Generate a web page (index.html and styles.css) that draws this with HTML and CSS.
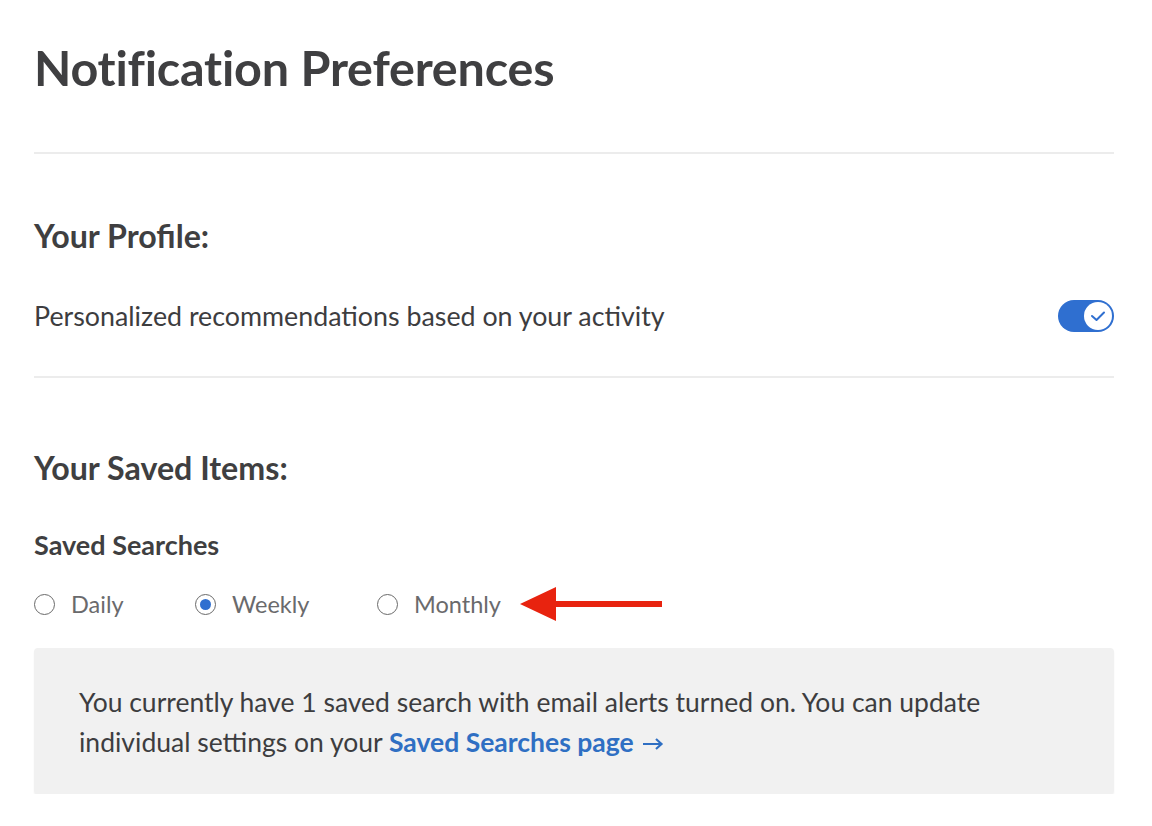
FILE: index.html
```html
<!DOCTYPE html>
<html>
<head>
<meta charset="utf-8">
<link rel="stylesheet" href="styles.css">
</head>
<body>
<main class="page">
  <h1 class="title">Notification Preferences</h1>
  <hr class="divider">
  <section class="section">
    <h2 class="section-title">Your Profile:</h2>
    <div class="setting-row">
      <span class="setting-label">Personalized recommendations based on your activity</span>
      <span class="toggle">
        <span class="knob">
          <svg width="16" height="12" viewBox="0 0 16 12"><path d="M2 6 L6.5 10 L14 2.5" fill="none" stroke="#2f6fd0" stroke-width="2" stroke-linecap="round" stroke-linejoin="round"/></svg>
        </span>
      </span>
    </div>
  </section>
  <hr class="divider tight">
  <section class="section saved">
    <h2 class="section-title">Your Saved Items:</h2>
    <h3 class="sub-title">Saved Searches</h3>
    <div class="radios">
      <label class="radio r-daily"><span class="dot"></span><span class="radio-text">Daily</span></label>
      <label class="radio r-weekly"><span class="dot checked"></span><span class="radio-text">Weekly</span></label>
      <label class="radio r-monthly"><span class="dot"></span><span class="radio-text">Monthly</span></label>
      <svg class="arrow" width="143" height="34" viewBox="0 0 143 34"><path d="M0 17 L36 0 L36 14 L142 14 L142 20 L36 20 L36 34 Z" fill="#e8230f"/></svg>
    </div>
    <div class="info-box">
      You currently have 1 saved search with email alerts turned on. You can update individual settings on your <a class="link" href="#">Saved Searches page<svg class="link-arrow" width="22" height="14" viewBox="0 0 22 14"><path d="M1 7 H19 M14 2 L19.5 7 L14 12" fill="none" stroke="#2f6fc3" stroke-width="2.2" stroke-linejoin="miter"/></svg></a>
    </div>
  </section>
</main>
</body>
</html>
```
FILE: styles.css
```css
html, body {
  margin: 0;
  padding: 0;
  background: #ffffff;
}
body {
  font-family: "Lato", "Open Sans", sans-serif;
  color: #3d3d3f;
}
.page {
  padding: 36px 38px 0 34px;
}
.title {
  margin: 0;
  font-size: 48.5px;
  font-weight: 700;
  line-height: 62px;
  color: #3f3f41;
  letter-spacing: -0.2px;
}
.divider {
  border: 0;
  border-top: 2px solid #ececec;
  margin: 54px 0 0 0;
}
.divider.tight {
  margin-top: 42px;
}
.section {
  padding-top: 62px;
}
.section-title {
  margin: 0;
  font-size: 32.2px;
  font-weight: 700;
  line-height: 40px;
  color: #3f3f41;
}
.setting-row {
  display: flex;
  align-items: center;
  justify-content: space-between;
  margin-top: 42px;
}
.setting-label {
  font-size: 26.8px;
  line-height: 36px;
  color: #3d3d3f;
}
.toggle {
  width: 56px;
  height: 32px;
  border-radius: 16px;
  background: #2f6fd0;
  display: flex;
  align-items: center;
  justify-content: flex-end;
  padding: 0 2px;
  box-sizing: border-box;
}
.knob {
  width: 28px;
  height: 28px;
  border-radius: 50%;
  background: #fff;
  display: flex;
  align-items: center;
  justify-content: center;
}
.saved {
  padding-top: 70px;
}
.sub-title {
  margin: 40px 0 0 0;
  font-size: 27px;
  font-weight: 700;
  line-height: 34px;
  color: #3f3f41;
}
.radios {
  display: flex;
  align-items: center;
  margin-top: 24px;
  height: 36px;
}
.radio {
  display: flex;
  align-items: center;
  gap: 16px;
}
.r-daily {
  width: 161px;
}
.r-weekly {
  width: 182px;
}
.r-monthly {
  margin-right: 19px;
}
.dot {
  flex: none;
  width: 21px;
  height: 21px;
  border: 1.5px solid #6a6a6a;
  border-radius: 50%;
  box-sizing: border-box;
  display: flex;
  align-items: center;
  justify-content: center;
}
.dot.checked::after {
  content: "";
  width: 11px;
  height: 11px;
  border-radius: 50%;
  background: #2f6fd0;
}
.radio-text {
  font-size: 23.5px;
  color: #6a6a6c;
}
.arrow {
  display: block;
}
.info-box {
  margin-top: 26px;
  background: #f1f1f1;
  border-radius: 4px;
  box-shadow: 0 2px 2px rgba(0,0,0,0.06);
  padding: 34px 45px 32px 45px;
  font-size: 26.5px;
  line-height: 40px;
  color: #3d3d3f;
}
.link {
  color: #2f6fc3;
  font-weight: 700;
  text-decoration: none;
}
.link-arrow {
  margin-left: 8px;
  vertical-align: 1px;
}
```
